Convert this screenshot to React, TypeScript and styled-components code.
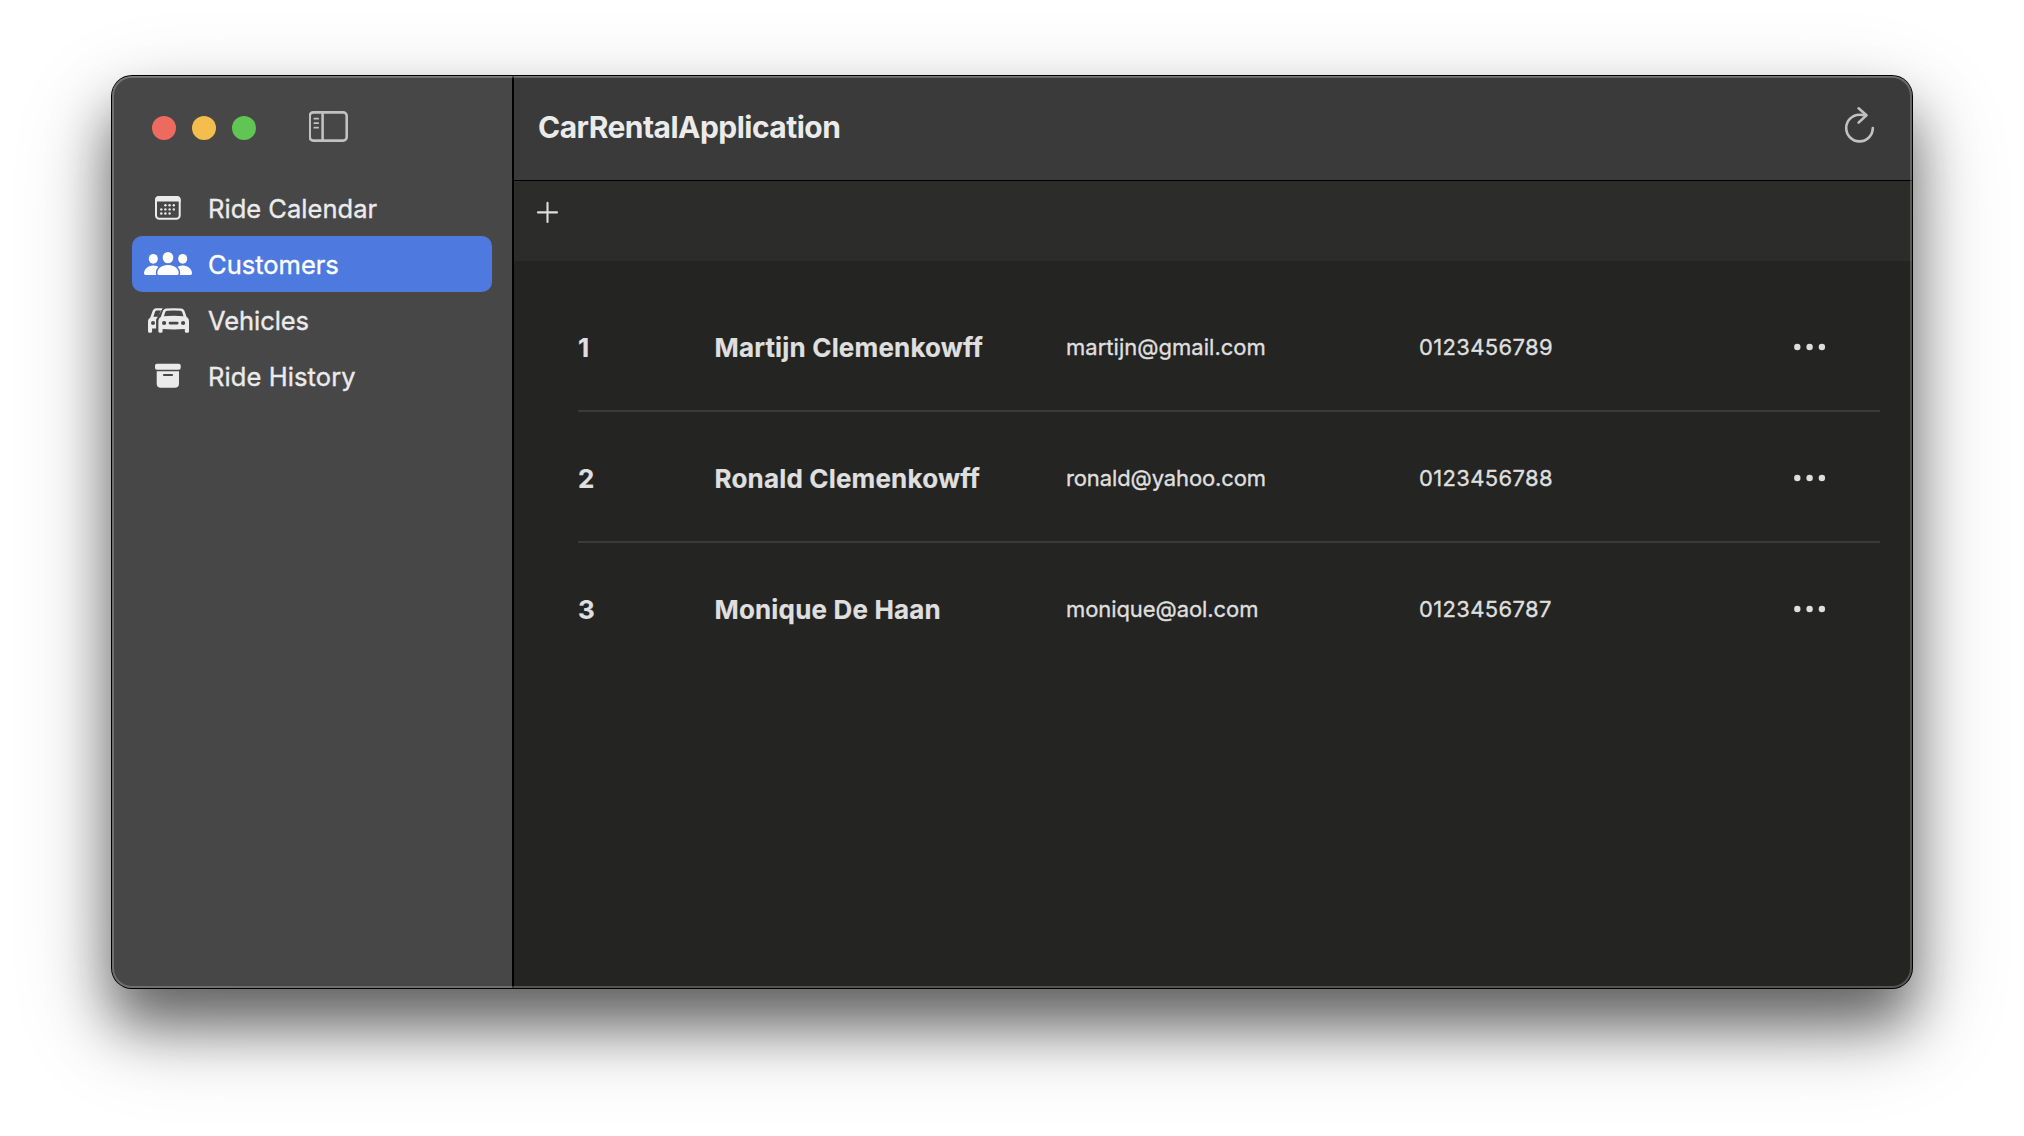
import React from "react";
import styled, { createGlobalStyle } from "styled-components";

const GlobalStyle = createGlobalStyle`
  * { box-sizing: border-box; }
  body {
    margin: 0;
    background: #fff;
    overflow: hidden;
    font-family: Inter, "Liberation Sans", sans-serif;
  }
`;

const Desktop = styled.div`
  height: 1136px;
  padding: 76px 112px 148px;
`;

const Window = styled.main`
  position: relative;
  display: flex;
  width: 1800px;
  height: 912px;
  border-radius: 20px;
  background: #242422;
  box-shadow:
    0 0 0 1px #000,
    0 36px 56px rgba(0, 0, 0, 0.52),
    0 36px 100px rgba(0, 0, 0, 0.23);

  &::after {
    content: "";
    position: absolute;
    inset: 0;
    border-radius: 20px;
    box-shadow:
      inset 0 1px 0 rgba(255, 255, 255, 0.12),
      inset 0 0 0 2px rgba(255, 255, 255, 0.22);
    pointer-events: none;
  }
`;

const Sidebar = styled.aside`
  display: flex;
  flex-direction: column;
  width: 402px;
  border-right: 2px solid #000;
  border-radius: 20px 0 0 20px;
  background: #474747;
`;

const TitleControls = styled.div`
  display: flex;
  align-items: center;
  height: 104px;
  padding-left: 40px;
`;

const Lights = styled.div`
  display: flex;
  gap: 16px;
  margin-right: 53px;
`;

const Light = styled.span<{ $color: string }>`
  width: 24px;
  height: 24px;
  border-radius: 50%;
  background: ${(p) => p.$color};
`;

const PlainButton = styled.button`
  display: flex;
  padding: 0;
  border: 0;
  background: none;
  color: #c1c1c1;
`;

const MoreButton = styled(PlainButton)`
  color: #dedede;
`;

const Nav = styled.nav`
  display: flex;
  flex-direction: column;
  padding: 0 20px;
`;

const NavItem = styled.a<{ $active?: boolean }>`
  display: flex;
  align-items: center;
  gap: 16px;
  height: 56px;
  padding-left: 12px;
  border-radius: 10px;
  background: ${(p) => (p.$active ? "#4e7ae0" : "transparent")};
  color: ${(p) => (p.$active ? "#fff" : "#ebebeb")};
  --icon-bg: ${(p) => (p.$active ? "#4e7ae0" : "#474747")};
`;

const NavIcon = styled.svg`
  flex: none;
  width: 48px;
  height: 28px;
`;

const NavLabel = styled.span<{ $spacing: number }>`
  padding-top: 1px;
  font-size: 25.5px;
  font-weight: 400;
  line-height: 30px;
  letter-spacing: ${(p) => p.$spacing}px;
  -webkit-text-stroke: 0.35px currentColor;
`;

const Main = styled.section`
  display: flex;
  flex: 1;
  flex-direction: column;
`;

const TitleBar = styled.header`
  display: flex;
  align-items: center;
  justify-content: space-between;
  height: 105px;
  padding: 0 36px 0 24px;
  border-bottom: 1px solid #000;
  border-radius: 0 20px 0 0;
  background: #3a3a3a;
`;

const Title = styled.h1`
  margin: 0;
  padding-bottom: 3px;
  color: #ebebeb;
  font-size: 30px;
  font-weight: 650;
  line-height: 36px;
  letter-spacing: -0.53px;
`;

const ActionBar = styled.div`
  height: 80px;
  padding: 20px 22px;
  background: #2c2c2b;
`;

const CustomerList = styled.ul`
  display: flex;
  flex-direction: column;
  margin: 0;
  padding: 20px 32px 0 64px;
  list-style: none;
`;

const CustomerRow = styled.li`
  display: grid;
  grid-template-columns: 136.5px 351.5px 353px 1fr auto;
  align-items: center;
  height: 131px;
  padding: 2px 52px 0 0;
  border-bottom: 2px solid #3a3a38;
  color: #dfdfdf;

  &:last-child {
    border-bottom-color: transparent;
  }
`;

const Strong = styled.span`
  padding-top: 2px;
  font-size: 26px;
  font-weight: 700;
  line-height: 32px;
  letter-spacing: 0.17px;
  -webkit-text-stroke: 0.2px currentColor;
`;

const Detail = styled.span<{ $spacing?: number }>`
  font-size: 22px;
  font-weight: 400;
  line-height: 28px;
  letter-spacing: ${(p) => p.$spacing ?? 0}px;
  -webkit-text-stroke: 0.35px currentColor;
`;

function SidebarIcon() {
  return (
    <svg width="40" height="36" viewBox="309.5 110 40 36" fill="none" stroke="currentColor" strokeWidth="2.6">
      <rect x="310.2" y="112.4" width="37" height="28.2" rx="3.6" />
      <path d="M323.1 112.4v28.2" />
      <path d="M314.8 118.7h3.9M314.8 123.2h3.9M314.8 127.7h3.9" strokeWidth="1.7" strokeLinecap="round" />
    </svg>
  );
}

function RefreshIcon() {
  return (
    <svg width="32" height="44" viewBox="1844 106 32 44" fill="none" stroke="currentColor" strokeWidth="2.6" strokeLinecap="round" strokeLinejoin="round">
      <path d="M1866 115.4C1864 114.9 1861.8 114.8 1859.5 114.8A13.3 13.3 0 1 0 1872.8 128.1" />
      <path d="M1858.6 108.3L1866.5 115.3L1858.6 122.6" />
    </svg>
  );
}

function PlusIcon() {
  return (
    <svg width="24" height="24" viewBox="0 0 24 24" fill="none" stroke="#dedede" strokeWidth="2.1" strokeLinecap="round">
      <path d="M11.5 1.9v19M2 11.4h19" />
    </svg>
  );
}

function MoreIcon() {
  return (
    <svg width="34" height="8" viewBox="0 0 34 8" fill="currentColor">
      <circle cx="3.3" cy="4" r="3.2" />
      <circle cx="15.6" cy="4" r="3.2" />
      <circle cx="27.9" cy="4" r="3.2" />
    </svg>
  );
}

const calendarDots = [
  [165.4, 205.3], [169.6, 205.3], [173.8, 205.3],
  [161.3, 209.4], [165.4, 209.4], [169.6, 209.4], [173.8, 209.4],
  [161.3, 213.5], [165.4, 213.5], [169.6, 213.5],
];

const CalendarIcon = () => (
  <NavIcon viewBox="144 194 48 28">
    <rect x="156" y="197" width="23.7" height="21.8" rx="3.4" fill="none" stroke="currentColor" strokeWidth="2" />
    <path d="M155 202.6v-2.6a4 4 0 0 1 4-4h17.7a4 4 0 0 1 4 4v2.6a1.8 1.8 0 0 0-1.8-1H156.8a1.8 1.8 0 0 0-1.8 1z" fill="currentColor" />
    {calendarDots.map(([x, y]) => (
      <circle key={`${x}-${y}`} cx={x} cy={y} r="1.2" fill="currentColor" />
    ))}
  </NavIcon>
);

const PeopleIcon = () => (
  <NavIcon viewBox="144 250 48 28" fill="currentColor">
    <ellipse cx="153.3" cy="258.8" rx="4.5" ry="4.9" />
    <ellipse cx="182.7" cy="258.8" rx="4.5" ry="4.9" />
    <path d="M144 273.2c0-3.7 3.8-7.8 9.3-7.8s9.3 4.1 9.3 7.8c0 1.2-.8 1.8-2 1.8H146c-1.2 0-2-.6-2-1.8z" />
    <path d="M173.4 273.2c0-3.7 3.8-7.8 9.3-7.8s9.3 4.1 9.3 7.8c0 1.2-.8 1.8-2 1.8h-14.6c-1.2 0-2-.6-2-1.8z" />
    <path
      d="M157.3 272.9c0-3.7 4-8 10.7-8s10.7 4.3 10.7 8c0 1.4-.8 2.1-2.2 2.1h-17c-1.4 0-2.2-.7-2.2-2.1z"
      stroke="var(--icon-bg)" strokeWidth="3" paintOrder="stroke"
    />
    <ellipse cx="168" cy="257.6" rx="5.3" ry="5.7" />
  </NavIcon>
);

const CarsIcon = () => (
  <NavIcon viewBox="144 306 48 28" fill="currentColor">
    <path fillRule="evenodd" d="M156.2 308.3h6.6l-4.4 7.8-2.3 3.5v9h-4v2.6a1.6 1.6 0 0 1-1.6 1.6h-.9a1.6 1.6 0 0 1-1.6-1.6v-9.5c0-2 .7-3.1 2.3-4.3l2-5.6c.8-2.3 1.9-3.5 3.9-3.5zM156.8 310.6c-1 0-1.5.5-1.9 1.6l-1.5 4.5h4.6l3-6.1z" />
    <circle cx="153" cy="323" r="2" fill="var(--icon-bg)" />
    <path
      stroke="var(--icon-bg)" strokeWidth="3" paintOrder="stroke"
      d="M166.3 308.5q7.4-.7 14.8 0c1.9.2 3 1.2 3.6 3l1.9 5.6c1.6 1 2.4 2.3 2.4 4.3v9.8a1.6 1.6 0 0 1-1.6 1.6h-1a1.6 1.6 0 0 1-1.6-1.6v-2.2q-11 .8-22.2 0v2.2a1.6 1.6 0 0 1-1.6 1.6h-1a1.6 1.6 0 0 1-1.6-1.6v-9.8c0-2 .8-3.3 2.4-4.3l1.9-5.6c.6-1.8 1.7-2.8 3.6-3z"
    />
    <path d="M167 310.7q6.7-.6 13.4 0c1 .1 1.5.6 1.8 1.5l1.3 4q-9.8-.7-19.6 0l1.3-4c.3-.9.8-1.4 1.8-1.5z" fill="var(--icon-bg)" />
    <circle cx="164.1" cy="323" r="2.1" fill="var(--icon-bg)" />
    <circle cx="183.1" cy="323" r="2.1" fill="var(--icon-bg)" />
    <rect x="168.6" y="321.7" width="10" height="2.7" rx="1.35" fill="var(--icon-bg)" />
  </NavIcon>
);

const ArchiveIcon = () => (
  <NavIcon viewBox="144 362 48 28" fill="currentColor">
    <rect x="155" y="363.7" width="25.7" height="6" rx="1.9" />
    <path d="M156.7 371.2H179v12.3q0 4.3-4.3 4.3H161q-4.3 0-4.3-4.3z" />
    <rect x="162.9" y="374" width="10.2" height="2.1" rx="1.05" fill="var(--icon-bg)" />
  </NavIcon>
);

const navItems = [
  { label: "Ride Calendar", Icon: CalendarIcon, spacing: 0.02 },
  { label: "Customers", Icon: PeopleIcon, spacing: 0 },
  { label: "Vehicles", Icon: CarsIcon, spacing: -0.06 },
  { label: "Ride History", Icon: ArchiveIcon, spacing: 0.1 },
];

const customers = [
  { id: 1, name: "Martijn Clemenkowff", email: "martijn@gmail.com", phone: "0123456789", spacing: 0.02 },
  { id: 2, name: "Ronald Clemenkowff", email: "ronald@yahoo.com", phone: "0123456788", spacing: -0.12 },
  { id: 3, name: "Monique De Haan", email: "monique@aol.com", phone: "0123456787", spacing: -0.08 },
];

export default function App() {
  return (
    <>
      <GlobalStyle />
      <Desktop>
        <Window>
          <Sidebar>
            <TitleControls>
              <Lights>
                <Light $color="#ed6a5e" />
                <Light $color="#f4be4f" />
                <Light $color="#61c554" />
              </Lights>
              <PlainButton aria-label="Toggle sidebar">
                <SidebarIcon />
              </PlainButton>
            </TitleControls>
            <Nav>
              {navItems.map(({ label, Icon, spacing }) => (
                <NavItem key={label} $active={label === "Customers"}>
                  <Icon />
                  <NavLabel $spacing={spacing}>{label}</NavLabel>
                </NavItem>
              ))}
            </Nav>
          </Sidebar>
          <Main>
            <TitleBar>
              <Title>CarRentalApplication</Title>
              <PlainButton aria-label="Refresh">
                <RefreshIcon />
              </PlainButton>
            </TitleBar>
            <ActionBar>
              <PlainButton aria-label="Add customer">
                <PlusIcon />
              </PlainButton>
            </ActionBar>
            <CustomerList>
              {customers.map((c) => (
                <CustomerRow key={c.id}>
                  <Strong>{c.id}</Strong>
                  <Strong>{c.name}</Strong>
                  <Detail $spacing={c.spacing}>{c.email}</Detail>
                  <Detail $spacing={0.36}>{c.phone}</Detail>
                  <MoreButton aria-label="More actions">
                    <MoreIcon />
                  </MoreButton>
                </CustomerRow>
              ))}
            </CustomerList>
          </Main>
        </Window>
      </Desktop>
    </>
  );
}
